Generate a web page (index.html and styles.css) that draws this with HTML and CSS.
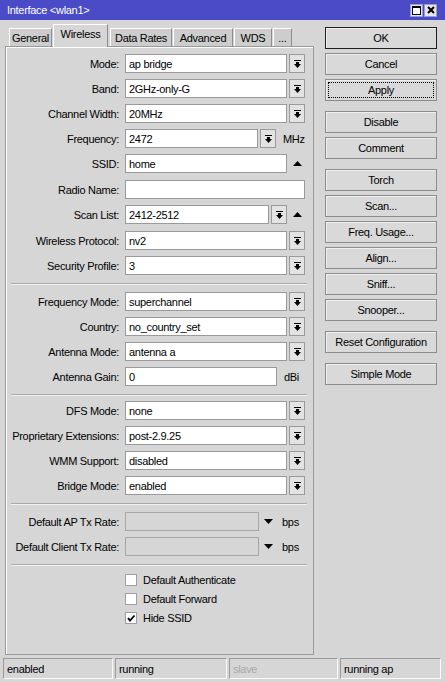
FILE: index.html
```html
<!DOCTYPE html>
<html>
<head>
<meta charset="utf-8">
<title>Interface &lt;wlan1&gt;</title>
<link rel="stylesheet" href="styles.css">
</head>
<body>
<div class="titlebar">
  <span class="title">Interface &lt;wlan1&gt;</span>
  <div class="tb-btns">
    <span class="tb-btn"><svg width="9" height="9" viewBox="0 0 9 9"><rect x="0.5" y="0.5" width="8" height="8" fill="#fff" stroke="#000"/><rect x="0" y="0" width="9" height="2" fill="#000"/></svg></span>
    <span class="tb-btn"><svg width="8" height="8" viewBox="0 0 8 8"><path d="M1 1L7 7M7 1L1 7" stroke="#000" stroke-width="2"/></svg></span>
  </div>
</div>

<div class="main">
  <div class="left">
    <div class="tabs">
      <div class="tab t-general">General</div>
      <div class="tab active t-wireless">Wireless</div>
      <div class="tab t-data">Data Rates</div>
      <div class="tab t-adv">Advanced</div>
      <div class="tab t-wds">WDS</div>
      <div class="tab t-more">...</div>
    </div>
    <div class="panel">
      <div class="group g1">
        <div class="row"><span class="lbl">Mode:</span><div class="field w162">ap bridge</div><span class="dd"><svg width="7" height="8" viewBox="0 0 7 8"><path d="M0 0h7v1H0z M2 2h3v2h2L3.5 8 0 4h2z"/></svg></span></div>
        <div class="row"><span class="lbl">Band:</span><div class="field w162">2GHz-only-G</div><span class="dd"><svg width="7" height="8" viewBox="0 0 7 8"><path d="M0 0h7v1H0z M2 2h3v2h2L3.5 8 0 4h2z"/></svg></span></div>
        <div class="row"><span class="lbl">Channel Width:</span><div class="field w162">20MHz</div><span class="dd"><svg width="7" height="8" viewBox="0 0 7 8"><path d="M0 0h7v1H0z M2 2h3v2h2L3.5 8 0 4h2z"/></svg></span></div>
        <div class="row"><span class="lbl">Frequency:</span><div class="field w133">2472</div><span class="dd"><svg width="7" height="8" viewBox="0 0 7 8"><path d="M0 0h7v1H0z M2 2h3v2h2L3.5 8 0 4h2z"/></svg></span><span class="unit">MHz</span></div>
        <div class="row"><span class="lbl">SSID:</span><div class="field w162">home</div><span class="up"><svg width="9" height="5" viewBox="0 0 9 5"><polygon points="0,5 9,5 4.5,0"/></svg></span></div>
        <div class="row r7"><span class="lbl">Radio Name:</span><div class="field w180"></div></div>
        <div class="row"><span class="lbl">Scan List:</span><div class="field w144">2412-2512</div><span class="dd"><svg width="7" height="8" viewBox="0 0 7 8"><path d="M0 0h7v1H0z M2 2h3v2h2L3.5 8 0 4h2z"/></svg></span><span class="up"><svg width="9" height="5" viewBox="0 0 9 5"><polygon points="0,5 9,5 4.5,0"/></svg></span></div>
        <div class="row r7"><span class="lbl">Wireless Protocol:</span><div class="field w162">nv2</div><span class="dd"><svg width="7" height="8" viewBox="0 0 7 8"><path d="M0 0h7v1H0z M2 2h3v2h2L3.5 8 0 4h2z"/></svg></span></div>
        <div class="row"><span class="lbl">Security Profile:</span><div class="field w162">3</div><span class="dd"><svg width="7" height="8" viewBox="0 0 7 8"><path d="M0 0h7v1H0z M2 2h3v2h2L3.5 8 0 4h2z"/></svg></span></div>
      </div>
      <div class="sep"></div>
      <div class="group g2">
        <div class="row"><span class="lbl">Frequency Mode:</span><div class="field w162">superchannel</div><span class="dd"><svg width="7" height="8" viewBox="0 0 7 8"><path d="M0 0h7v1H0z M2 2h3v2h2L3.5 8 0 4h2z"/></svg></span></div>
        <div class="row"><span class="lbl">Country:</span><div class="field w162">no_country_set</div><span class="dd"><svg width="7" height="8" viewBox="0 0 7 8"><path d="M0 0h7v1H0z M2 2h3v2h2L3.5 8 0 4h2z"/></svg></span></div>
        <div class="row"><span class="lbl">Antenna Mode:</span><div class="field w162">antenna a</div><span class="dd"><svg width="7" height="8" viewBox="0 0 7 8"><path d="M0 0h7v1H0z M2 2h3v2h2L3.5 8 0 4h2z"/></svg></span></div>
        <div class="row"><span class="lbl">Antenna Gain:</span><div class="field w152">0</div><span class="unit">dBi</span></div>
      </div>
      <div class="sep"></div>
      <div class="group g3">
        <div class="row"><span class="lbl">DFS Mode:</span><div class="field w162">none</div><span class="dd"><svg width="7" height="8" viewBox="0 0 7 8"><path d="M0 0h7v1H0z M2 2h3v2h2L3.5 8 0 4h2z"/></svg></span></div>
        <div class="row"><span class="lbl">Proprietary Extensions:</span><div class="field w162">post-2.9.25</div><span class="dd"><svg width="7" height="8" viewBox="0 0 7 8"><path d="M0 0h7v1H0z M2 2h3v2h2L3.5 8 0 4h2z"/></svg></span></div>
        <div class="row"><span class="lbl">WMM Support:</span><div class="field w162">disabled</div><span class="dd"><svg width="7" height="8" viewBox="0 0 7 8"><path d="M0 0h7v1H0z M2 2h3v2h2L3.5 8 0 4h2z"/></svg></span></div>
        <div class="row"><span class="lbl">Bridge Mode:</span><div class="field w162">enabled</div><span class="dd"><svg width="7" height="8" viewBox="0 0 7 8"><path d="M0 0h7v1H0z M2 2h3v2h2L3.5 8 0 4h2z"/></svg></span></div>
      </div>
      <div class="sep"></div>
      <div class="group g4">
        <div class="row"><span class="lbl">Default AP Tx Rate:</span><div class="field w134 disabled"></div><span class="down"><svg width="9" height="5" viewBox="0 0 9 5"><polygon points="0,0 9,0 4.5,5"/></svg></span><span class="unit2">bps</span></div>
        <div class="row"><span class="lbl">Default Client Tx Rate:</span><div class="field w134 disabled"></div><span class="down"><svg width="9" height="5" viewBox="0 0 9 5"><polygon points="0,0 9,0 4.5,5"/></svg></span><span class="unit2">bps</span></div>
      </div>
      <div class="sep"></div>
      <div class="group g5">
        <div class="cbrow"><span class="cb"></span><span class="cblbl">Default Authenticate</span></div>
        <div class="cbrow"><span class="cb"></span><span class="cblbl">Default Forward</span></div>
        <div class="cbrow"><span class="cb"><svg width="10" height="10" viewBox="0 0 10 10"><polyline points="2,5 4,7.5 8.5,2.5" fill="none" stroke="#000" stroke-width="1.8"/></svg></span><span class="cblbl">Hide SSID</span></div>
      </div>
    </div>
  </div>

  <div class="right">
    <div class="btn default">OK</div>
    <div class="btn">Cancel</div>
    <div class="btn focus">Apply</div>
    <div class="btn gap">Disable</div>
    <div class="btn">Comment</div>
    <div class="btn gap">Torch</div>
    <div class="btn">Scan...</div>
    <div class="btn">Freq. Usage...</div>
    <div class="btn">Align...</div>
    <div class="btn">Sniff...</div>
    <div class="btn">Snooper...</div>
    <div class="btn gap">Reset Configuration</div>
    <div class="btn gap">Simple Mode</div>
  </div>
</div>

<div class="status">
  <div class="cell c1">enabled</div>
  <div class="cell c2">running</div>
  <div class="cell c3 dim">slave</div>
  <div class="cell c4">running ap</div>
</div>
</body>
</html>
```

FILE: styles.css
```css
* { box-sizing: border-box; }

body {
  margin: 0;
  width: 445px;
  height: 682px;
  overflow: hidden;
  background: #d6d6d6;
  font-family: "Liberation Sans", Arial, sans-serif;
  font-size: 11px;
  letter-spacing: -0.3px;
  color: #000;
}

.titlebar {
  height: 20px;
  background: #4b4bc8;
  color: #fff;
  display: flex;
  align-items: center;
  justify-content: space-between;
  padding: 0 8px 0 7px;
}

.tb-btns { display: flex; gap: 1px; }

.tb-btn {
  width: 13px;
  height: 13px;
  background: #e6e6e6;
  border: 1px solid #9a9ad8;
  display: flex;
  align-items: center;
  justify-content: center;
}

.main { display: flex; }

.left {
  margin-left: 5px;
  width: 309px;
  margin-top: 4px;
}

.tabs {
  display: flex;
  align-items: flex-end;
  height: 22px;
  padding-left: 4px;
}

.tab {
  height: 18px;
  background: #cdcdcd;
  border-left: 1px solid #fff;
  border-top: 1px solid #fff;
  border-right: 1px solid #8c8c8c;
  display: flex;
  align-items: center;
  justify-content: center;
  white-space: nowrap;
  margin-right: 1px;
}

.tab.active {
  height: 23px;
  margin-bottom: -1px;
  background: #d6d6d6;
  position: relative;
  z-index: 1;
  padding-bottom: 4px;
  margin-right: 2px;
}

.t-general { width: 43px; }
.t-wireless { width: 55px; }
.t-data { width: 62px; }
.t-adv { width: 60px; }
.t-wds { width: 38px; }
.t-more { width: 19px; }

.panel {
  height: 609px;
  border: 1px solid #9a9a9a;
  box-shadow: inset 1px 1px 0 #fff;
  padding-top: 7px;
}

.row {
  display: flex;
  align-items: center;
  height: 19px;
  margin-top: 6px;
}

.group > .row:first-child { margin-top: 0; }
.row.r7 { margin-top: 7px; }

.g2 { margin-top: 7px; }
.g3 { margin-top: 5px; }
.g4 { margin-top: 7px; }
.g4 > .row + .row { margin-top: 6px; }
.g5 { margin-top: 8px; }

.sep {
  margin: 8px 6px 0 5px;
  border-top: 1px solid #a9a9a9;
  border-bottom: 1px solid #f2f2f2;
}

.lbl {
  width: 113px;
  margin-right: 6px;
  text-align: right;
  white-space: nowrap;
}

.field {
  height: 19px;
  background: #fff;
  border: 1px solid #9a9a9a;
  padding-left: 3px;
  display: flex;
  align-items: center;
  white-space: nowrap;
}

.field.disabled { background: #d6d6d6; border-color: #a6a6a6; }

.w162 { width: 162px; }
.w133 { width: 133px; }
.w144 { width: 144px; }
.w180 { width: 180px; }
.w152 { width: 152px; }
.w134 { width: 134px; }

.dd {
  width: 16px;
  height: 19px;
  margin-left: 2px;
  background: #e3e3e3;
  border: 1px solid #9a9a9a;
  display: flex;
  align-items: center;
  justify-content: center;
}

.up {
  width: 16px;
  margin-left: 2px;
  display: flex;
  justify-content: center;
  align-items: center;
}

.down {
  width: 9px;
  margin-left: 5px;
  display: flex;
  align-items: center;
}

.unit { margin-left: 7px; }
.unit2 { margin-left: 9px; }

.cbrow {
  display: flex;
  align-items: center;
  height: 12px;
  margin-top: 7px;
  padding-left: 119px;
}

.g5 > .cbrow:first-child { margin-top: 0; }

.cb {
  width: 12px;
  height: 12px;
  background: #fff;
  border: 1px solid #a0a0a0;
  display: flex;
  align-items: center;
  justify-content: center;
}

.cblbl { margin-left: 6px; white-space: nowrap; }

.right {
  margin-left: 11px;
  margin-top: 7px;
  width: 112px;
}

.btn {
  height: 22px;
  margin-top: 4px;
  border: 1px solid #8c8c8c;
  box-shadow: inset 1px 1px 0 #efefef;
  background: #d9d9d9;
  display: flex;
  align-items: center;
  justify-content: center;
  white-space: nowrap;
}

.btn:first-child { margin-top: 0; }
.btn.gap { margin-top: 10px; }
.btn.default { border-color: #1e1e1e; }
.btn.focus { outline: 1px dotted #000; outline-offset: -4px; }

.status {
  display: flex;
  gap: 2px;
  height: 21px;
  margin-top: 3px;
  padding-left: 3px;
}

.cell {
  border: 1px solid;
  border-color: #9a9a9a #fafafa #fafafa #9a9a9a;
  padding-left: 3px;
  display: flex;
  align-items: center;
  white-space: nowrap;
}

.c1 { width: 110px; }
.c2 { width: 112px; }
.c3 { width: 109px; }
.c4 { width: 101px; }
.dim { color: #a9a9a9; }
```
